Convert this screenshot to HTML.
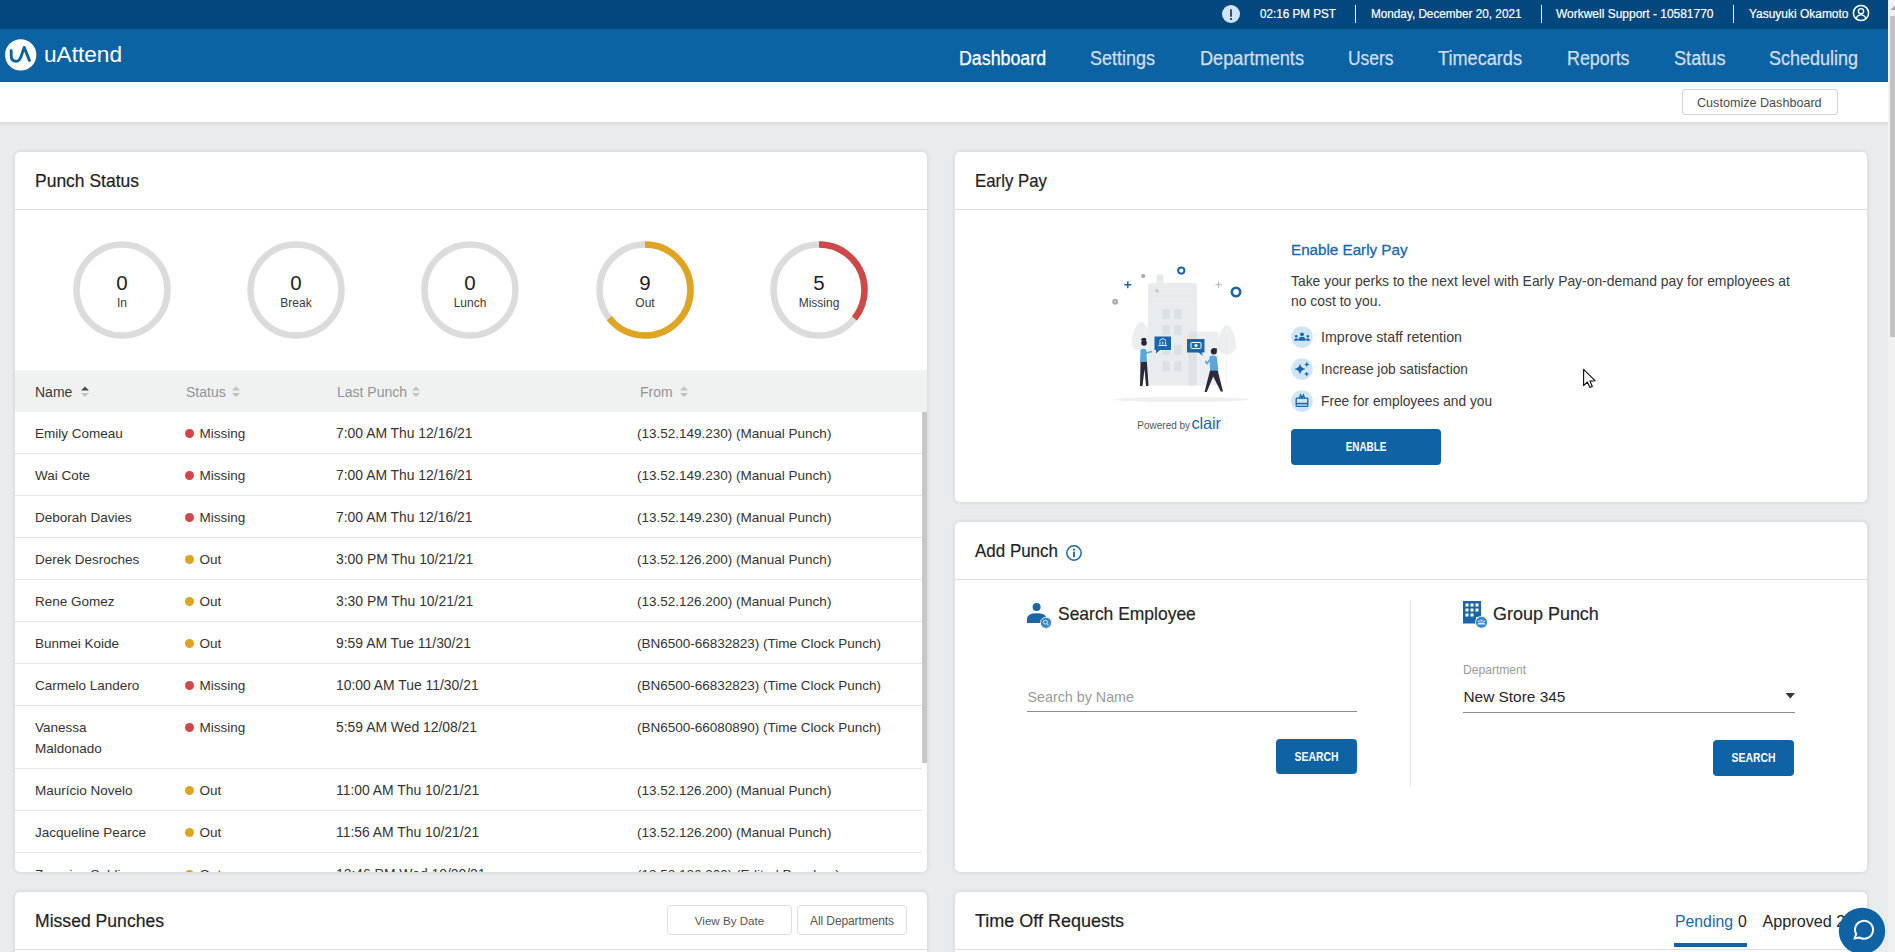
<!DOCTYPE html>
<html><head><meta charset="utf-8">
<style>
*{box-sizing:border-box;margin:0;padding:0}
html,body{width:1895px;height:952px;overflow:hidden}
body{position:relative;background:#e9ecef;font-family:"Liberation Sans",sans-serif;color:#333}
.a{position:absolute;white-space:nowrap;line-height:1}
.card{position:absolute;background:#fff;border-radius:5px;overflow:hidden;box-shadow:0 0 4px rgba(0,0,0,.13)}
</style></head><body>
<div style="position:absolute;left:0px;top:0px;width:1888px;height:29px;background:#02487f"></div>
<div style="position:absolute;left:1222px;top:5px;width:18px;height:18px;background:#cfe4f4;border-radius:50%"></div>
<div style="position:absolute;left:1230px;top:8.5px;width:2px;height:8px;background:#3b4a78;border-radius:1px"></div>
<div style="position:absolute;left:1230px;top:18px;width:2px;height:2px;background:#3b4a78"></div>
<div class="a" style="left:1260px;top:8px;font-size:12.5px;color:#fff;transform:scaleX(0.9347);transform-origin:0 0;-webkit-text-stroke:0.2px #fff">02:16 PM PST</div>
<div style="position:absolute;left:1355px;top:5px;width:1px;height:18px;background:#fff"></div>
<div class="a" style="left:1371px;top:8px;font-size:12.5px;color:#fff;transform:scaleX(0.9388);transform-origin:0 0;-webkit-text-stroke:0.2px #fff">Monday, December 20, 2021</div>
<div style="position:absolute;left:1541px;top:5px;width:1px;height:18px;background:#fff"></div>
<div class="a" style="left:1556px;top:8px;font-size:12.5px;color:#fff;transform:scaleX(0.9578);transform-origin:0 0;-webkit-text-stroke:0.2px #fff">Workwell Support - 10581770</div>
<div style="position:absolute;left:1733px;top:5px;width:1px;height:18px;background:#fff"></div>
<div class="a" style="left:1749px;top:8px;font-size:12.5px;color:#fff;transform:scaleX(0.9567);transform-origin:0 0;-webkit-text-stroke:0.2px #fff">Yasuyuki Okamoto</div>
<svg style="position:absolute;left:1852px;top:4px" width="18" height="18" viewBox="0 0 18 18"><circle cx="9" cy="9" r="7.6" fill="none" stroke="#fff" stroke-width="1.5"/><circle cx="9" cy="7.2" r="2.6" fill="none" stroke="#fff" stroke-width="1.4"/><path d="M4.2 14.6 C5.2 11.8 7 10.9 9 10.9 C11 10.9 12.8 11.8 13.8 14.6" fill="none" stroke="#fff" stroke-width="1.4"/></svg>
<div style="position:absolute;left:0px;top:29px;width:1888px;height:53px;background:#0c63a4"></div>
<svg style="position:absolute;left:0px;top:29px" width="40" height="53" viewBox="0 29 40 53"><circle cx="20.7" cy="54.9" r="15.6" fill="#fff"/><path d="M11.2 50.6 V55.6 C11.2 59.6 13.3 61.3 16 61.3 C18.7 61.3 20 59.6 21 56.6 L24.2 47.4 L29.4 60.4" fill="none" stroke="#0c63a4" stroke-width="2.9" stroke-linecap="round" stroke-linejoin="round"/></svg>
<div class="a" style="left:44px;top:44px;font-size:22.6px;color:#fff;transform:scaleX(1.0018);transform-origin:0 0;">uAttend</div>
<div class="a" style="left:959px;top:49px;font-size:19.5px;color:#fff;transform:scaleX(0.9124);transform-origin:0 0;-webkit-text-stroke:0.25px #fff">Dashboard</div>
<div class="a" style="left:1090px;top:49px;font-size:19.5px;color:#d3deea;transform:scaleX(0.9221);transform-origin:0 0;-webkit-text-stroke:0.25px #d3deea">Settings</div>
<div class="a" style="left:1200px;top:49px;font-size:19.5px;color:#d3deea;transform:scaleX(0.9316);transform-origin:0 0;-webkit-text-stroke:0.25px #d3deea">Departments</div>
<div class="a" style="left:1348px;top:49px;font-size:19.5px;color:#d3deea;transform:scaleX(0.8940);transform-origin:0 0;-webkit-text-stroke:0.25px #d3deea">Users</div>
<div class="a" style="left:1438px;top:49px;font-size:19.5px;color:#d3deea;transform:scaleX(0.9304);transform-origin:0 0;-webkit-text-stroke:0.25px #d3deea">Timecards</div>
<div class="a" style="left:1567px;top:49px;font-size:19.5px;color:#d3deea;transform:scaleX(0.9158);transform-origin:0 0;-webkit-text-stroke:0.25px #d3deea">Reports</div>
<div class="a" style="left:1674px;top:49px;font-size:19.5px;color:#d3deea;transform:scaleX(0.9316);transform-origin:0 0;-webkit-text-stroke:0.25px #d3deea">Status</div>
<div class="a" style="left:1769px;top:49px;font-size:19.5px;color:#d3deea;transform:scaleX(0.9220);transform-origin:0 0;-webkit-text-stroke:0.25px #d3deea">Scheduling</div>
<div style="position:absolute;left:0px;top:82px;width:1888px;height:40px;background:#fff;box-shadow:0 1px 4px rgba(0,0,0,.12)"></div>
<div style="position:absolute;left:1682px;top:89px;width:156px;height:26px;border:1px solid #d4d4d4;border-radius:3px;background:#fff"></div>
<div class="a" style="left:1697px;top:97px;font-size:12.6px;color:#4a4a4a;">Customize Dashboard</div>
<div style="position:absolute;left:1888px;top:0px;width:7px;height:952px;background:#f1f1f1"></div>
<div style="position:absolute;left:1890px;top:16px;width:5px;height:321px;background:#c2c1c2"></div>
<svg style="position:absolute;left:1890px;top:5px" width="5" height="6" viewBox="0 0 5 6"><path d="M0.5 5 L4.5 1 L5 1 L5 5 Z" fill="#a3a3a3"/></svg>
<div class="card" style="left:15px;top:152px;width:912px;height:720px">
<div class="a" style="left:20px;top:21px;font-size:17.5px;color:#1f1f1f;transform:scaleX(0.9988);transform-origin:0 0;-webkit-text-stroke:0.2px #222">Punch Status</div>
<div style="position:absolute;left:0px;top:57px;width:912px;height:1px;background:#dedede"></div>
<svg style="position:absolute;left:57px;top:88px" width="100" height="100" viewBox="0 0 100 100"><circle cx="50" cy="50" r="45.5" fill="none" stroke="#dcdcdc" stroke-width="6.5"/></svg>
<div class="a" style="left:57px;top:121px;font-size:20.5px;color:#1f1f1f;width:100px;text-align:center;">0</div>
<div class="a" style="left:57px;top:145px;font-size:12px;color:#3a3a3a;width:100px;text-align:center;">In</div>
<svg style="position:absolute;left:231px;top:88px" width="100" height="100" viewBox="0 0 100 100"><circle cx="50" cy="50" r="45.5" fill="none" stroke="#dcdcdc" stroke-width="6.5"/></svg>
<div class="a" style="left:231px;top:121px;font-size:20.5px;color:#1f1f1f;width:100px;text-align:center;">0</div>
<div class="a" style="left:231px;top:145px;font-size:12px;color:#3a3a3a;width:100px;text-align:center;">Break</div>
<svg style="position:absolute;left:405px;top:88px" width="100" height="100" viewBox="0 0 100 100"><circle cx="50" cy="50" r="45.5" fill="none" stroke="#dcdcdc" stroke-width="6.5"/></svg>
<div class="a" style="left:405px;top:121px;font-size:20.5px;color:#1f1f1f;width:100px;text-align:center;">0</div>
<div class="a" style="left:405px;top:145px;font-size:12px;color:#3a3a3a;width:100px;text-align:center;">Lunch</div>
<svg style="position:absolute;left:580px;top:88px" width="100" height="100" viewBox="0 0 100 100"><circle cx="50" cy="50" r="45.5" fill="none" stroke="#dcdcdc" stroke-width="6.5"/><circle cx="50" cy="50" r="45.5" fill="none" stroke="#e0a423" stroke-width="6.5" stroke-dasharray="183.78 285.88" transform="rotate(-90 50 50)"/></svg>
<div class="a" style="left:580px;top:121px;font-size:20.5px;color:#1f1f1f;width:100px;text-align:center;">9</div>
<div class="a" style="left:580px;top:145px;font-size:12px;color:#3a3a3a;width:100px;text-align:center;">Out</div>
<svg style="position:absolute;left:754px;top:88px" width="100" height="100" viewBox="0 0 100 100"><circle cx="50" cy="50" r="45.5" fill="none" stroke="#dcdcdc" stroke-width="6.5"/><circle cx="50" cy="50" r="45.5" fill="none" stroke="#d0474a" stroke-width="6.5" stroke-dasharray="102.10 285.88" transform="rotate(-90 50 50)"/></svg>
<div class="a" style="left:754px;top:121px;font-size:20.5px;color:#1f1f1f;width:100px;text-align:center;">5</div>
<div class="a" style="left:754px;top:145px;font-size:12px;color:#3a3a3a;width:100px;text-align:center;">Missing</div>
<div style="position:absolute;left:0px;top:218px;width:912px;height:42px;background:#f0f2f2"></div>
<div class="a" style="left:20px;top:233px;font-size:14px;color:#3a3a3a;">Name</div>
<div class="a" style="left:171px;top:233px;font-size:14px;color:#8d959b;">Status</div>
<div class="a" style="left:322px;top:233px;font-size:14px;color:#8d959b;">Last Punch</div>
<div class="a" style="left:625px;top:233px;font-size:14px;color:#8d959b;">From</div>
<svg style="position:absolute;left:65px;top:233px" width="10" height="14" viewBox="0 0 10 14"><path d="M1 5.5 L5 1.5 L9 5.5 Z" fill="#4a4a4a"/><path d="M1 8 L5 12 L9 8 Z" fill="#bfc3c6"/></svg>
<svg style="position:absolute;left:216px;top:233px" width="10" height="14" viewBox="0 0 10 14"><path d="M1 5.5 L5 1.5 L9 5.5 Z" fill="#bfc3c6"/><path d="M1 8 L5 12 L9 8 Z" fill="#bfc3c6"/></svg>
<svg style="position:absolute;left:396px;top:233px" width="10" height="14" viewBox="0 0 10 14"><path d="M1 5.5 L5 1.5 L9 5.5 Z" fill="#bfc3c6"/><path d="M1 8 L5 12 L9 8 Z" fill="#bfc3c6"/></svg>
<svg style="position:absolute;left:664px;top:233px" width="10" height="14" viewBox="0 0 10 14"><path d="M1 5.5 L5 1.5 L9 5.5 Z" fill="#bfc3c6"/><path d="M1 8 L5 12 L9 8 Z" fill="#bfc3c6"/></svg>
<div class="a" style="left:20px;top:275px;font-size:13.5px;color:#333;">Emily Comeau</div>
<div style="position:absolute;left:170px;top:276.5px;width:9px;height:9px;background:#d0474a;border-radius:50%"></div>
<div class="a" style="left:184.5px;top:275px;font-size:13.5px;color:#333;">Missing</div>
<div class="a" style="left:321px;top:275px;font-size:13.9px;color:#333;">7:00 AM Thu 12/16/21</div>
<div class="a" style="left:622px;top:275px;font-size:13.5px;color:#333;">(13.52.149.230) (Manual Punch)</div>
<div style="position:absolute;left:0px;top:301px;width:907px;height:1px;background:#e6e6e6"></div>
<div class="a" style="left:20px;top:317px;font-size:13.5px;color:#333;">Wai Cote</div>
<div style="position:absolute;left:170px;top:318.5px;width:9px;height:9px;background:#d0474a;border-radius:50%"></div>
<div class="a" style="left:184.5px;top:317px;font-size:13.5px;color:#333;">Missing</div>
<div class="a" style="left:321px;top:317px;font-size:13.9px;color:#333;">7:00 AM Thu 12/16/21</div>
<div class="a" style="left:622px;top:317px;font-size:13.5px;color:#333;">(13.52.149.230) (Manual Punch)</div>
<div style="position:absolute;left:0px;top:343px;width:907px;height:1px;background:#e6e6e6"></div>
<div class="a" style="left:20px;top:359px;font-size:13.5px;color:#333;">Deborah Davies</div>
<div style="position:absolute;left:170px;top:360.5px;width:9px;height:9px;background:#d0474a;border-radius:50%"></div>
<div class="a" style="left:184.5px;top:359px;font-size:13.5px;color:#333;">Missing</div>
<div class="a" style="left:321px;top:359px;font-size:13.9px;color:#333;">7:00 AM Thu 12/16/21</div>
<div class="a" style="left:622px;top:359px;font-size:13.5px;color:#333;">(13.52.149.230) (Manual Punch)</div>
<div style="position:absolute;left:0px;top:385px;width:907px;height:1px;background:#e6e6e6"></div>
<div class="a" style="left:20px;top:401px;font-size:13.5px;color:#333;">Derek Desroches</div>
<div style="position:absolute;left:170px;top:402.5px;width:9px;height:9px;background:#e0a423;border-radius:50%"></div>
<div class="a" style="left:184.5px;top:401px;font-size:13.5px;color:#333;">Out</div>
<div class="a" style="left:321px;top:401px;font-size:13.9px;color:#333;">3:00 PM Thu 10/21/21</div>
<div class="a" style="left:622px;top:401px;font-size:13.5px;color:#333;">(13.52.126.200) (Manual Punch)</div>
<div style="position:absolute;left:0px;top:427px;width:907px;height:1px;background:#e6e6e6"></div>
<div class="a" style="left:20px;top:443px;font-size:13.5px;color:#333;">Rene Gomez</div>
<div style="position:absolute;left:170px;top:444.5px;width:9px;height:9px;background:#e0a423;border-radius:50%"></div>
<div class="a" style="left:184.5px;top:443px;font-size:13.5px;color:#333;">Out</div>
<div class="a" style="left:321px;top:443px;font-size:13.9px;color:#333;">3:30 PM Thu 10/21/21</div>
<div class="a" style="left:622px;top:443px;font-size:13.5px;color:#333;">(13.52.126.200) (Manual Punch)</div>
<div style="position:absolute;left:0px;top:469px;width:907px;height:1px;background:#e6e6e6"></div>
<div class="a" style="left:20px;top:485px;font-size:13.5px;color:#333;">Bunmei Koide</div>
<div style="position:absolute;left:170px;top:486.5px;width:9px;height:9px;background:#e0a423;border-radius:50%"></div>
<div class="a" style="left:184.5px;top:485px;font-size:13.5px;color:#333;">Out</div>
<div class="a" style="left:321px;top:485px;font-size:13.9px;color:#333;">9:59 AM Tue 11/30/21</div>
<div class="a" style="left:622px;top:485px;font-size:13.5px;color:#333;">(BN6500-66832823) (Time Clock Punch)</div>
<div style="position:absolute;left:0px;top:511px;width:907px;height:1px;background:#e6e6e6"></div>
<div class="a" style="left:20px;top:527px;font-size:13.5px;color:#333;">Carmelo Landero</div>
<div style="position:absolute;left:170px;top:528.5px;width:9px;height:9px;background:#d0474a;border-radius:50%"></div>
<div class="a" style="left:184.5px;top:527px;font-size:13.5px;color:#333;">Missing</div>
<div class="a" style="left:321px;top:527px;font-size:13.9px;color:#333;">10:00 AM Tue 11/30/21</div>
<div class="a" style="left:622px;top:527px;font-size:13.5px;color:#333;">(BN6500-66832823) (Time Clock Punch)</div>
<div style="position:absolute;left:0px;top:553px;width:907px;height:1px;background:#e6e6e6"></div>
<div class="a" style="left:20px;top:569px;font-size:13.5px;color:#333;">Vanessa</div>
<div class="a" style="left:20px;top:590px;font-size:13.5px;color:#333;">Maldonado</div>
<div style="position:absolute;left:170px;top:570.5px;width:9px;height:9px;background:#d0474a;border-radius:50%"></div>
<div class="a" style="left:184.5px;top:569px;font-size:13.5px;color:#333;">Missing</div>
<div class="a" style="left:321px;top:569px;font-size:13.9px;color:#333;">5:59 AM Wed 12/08/21</div>
<div class="a" style="left:622px;top:569px;font-size:13.5px;color:#333;">(BN6500-66080890) (Time Clock Punch)</div>
<div style="position:absolute;left:0px;top:616px;width:907px;height:1px;background:#e6e6e6"></div>
<div class="a" style="left:20px;top:632px;font-size:13.5px;color:#333;">Maurício Novelo</div>
<div style="position:absolute;left:170px;top:633.5px;width:9px;height:9px;background:#e0a423;border-radius:50%"></div>
<div class="a" style="left:184.5px;top:632px;font-size:13.5px;color:#333;">Out</div>
<div class="a" style="left:321px;top:632px;font-size:13.9px;color:#333;">11:00 AM Thu 10/21/21</div>
<div class="a" style="left:622px;top:632px;font-size:13.5px;color:#333;">(13.52.126.200) (Manual Punch)</div>
<div style="position:absolute;left:0px;top:658px;width:907px;height:1px;background:#e6e6e6"></div>
<div class="a" style="left:20px;top:674px;font-size:13.5px;color:#333;">Jacqueline Pearce</div>
<div style="position:absolute;left:170px;top:675.5px;width:9px;height:9px;background:#e0a423;border-radius:50%"></div>
<div class="a" style="left:184.5px;top:674px;font-size:13.5px;color:#333;">Out</div>
<div class="a" style="left:321px;top:674px;font-size:13.9px;color:#333;">11:56 AM Thu 10/21/21</div>
<div class="a" style="left:622px;top:674px;font-size:13.5px;color:#333;">(13.52.126.200) (Manual Punch)</div>
<div style="position:absolute;left:0px;top:700px;width:907px;height:1px;background:#e6e6e6"></div>
<div class="a" style="left:20px;top:716px;font-size:13.5px;color:#333;">Zacarias Saldivar</div>
<div style="position:absolute;left:170px;top:717.5px;width:9px;height:9px;background:#e0a423;border-radius:50%"></div>
<div class="a" style="left:184.5px;top:716px;font-size:13.5px;color:#333;">Out</div>
<div class="a" style="left:321px;top:716px;font-size:13.9px;color:#333;">12:46 PM Wed 10/20/21</div>
<div class="a" style="left:622px;top:716px;font-size:13.5px;color:#333;">(13.52.126.200) (Edited Punches)</div>
<div style="position:absolute;left:0px;top:742px;width:907px;height:1px;background:#e6e6e6"></div>
<div style="position:absolute;left:907px;top:260px;width:5px;height:351px;background:#c8c8c8"></div>
</div>
<div class="card" style="left:955px;top:152px;width:912px;height:350px">
<div class="a" style="left:20px;top:21px;font-size:17.5px;color:#1f1f1f;transform:scaleX(0.9613);transform-origin:0 0;-webkit-text-stroke:0.2px #222">Early Pay</div>
<div style="position:absolute;left:0px;top:57px;width:912px;height:1px;background:#dedede"></div>
<svg style="position:absolute;left:145px;top:103px" width="160" height="185" viewBox="0 0 160 185"><ellipse cx="81" cy="144.5" rx="68" ry="2.6" fill="#eef0f2"/>
<path d="M41.3 66.7 C46 67 51 80 51 86.5 C51 92.5 46.5 95.7 41.3 95.7 C36 95.7 31.7 92.5 31.7 86.5 C31.7 80 36.5 67 41.3 66.7 Z" fill="#eceef0"/>
<path d="M126.8 70.3 C131.5 70.6 136.2 83.5 136.2 90 C136.2 96 131.8 99.3 126.8 99.3 C121.8 99.3 117.4 96 117.4 90 C117.4 83.5 122 70.6 126.8 70.3 Z" fill="#eceef0"/><path d="M126.4 81 V130.5" stroke="#e6e8ea" stroke-width="0.5"/>
<rect x="56.5" y="19.5" width="7" height="9" rx="1" fill="#e6e9ec"/>
<rect x="48" y="28" width="49" height="102.5" rx="3" fill="#e9ecef"/>
<line x1="49" y1="41" x2="95" y2="41" stroke="#dde1e5" stroke-width="0.6"/>
<rect x="88.4" y="76.5" width="30" height="54" rx="2" fill="#eceff1"/><rect x="88.4" y="76.5" width="8.5" height="54" rx="2" fill="#dee2e7"/>
<g fill="#dbe0e4">
<rect x="62.5" y="54" width="7.5" height="10" rx="1"/><rect x="74" y="54" width="7.5" height="10" rx="1"/>
<rect x="62.5" y="70" width="7.5" height="10" rx="1"/><rect x="74" y="70" width="7.5" height="10" rx="1"/>
<rect x="62.5" y="90" width="7.5" height="10" rx="1"/><rect x="74" y="90" width="7.5" height="10" rx="1"/>
<rect x="62.5" y="106.5" width="7.5" height="10" rx="1"/><rect x="74" y="106.5" width="7.5" height="10" rx="1"/>
</g>
<path d="M54.5 81.5 h16.5 v13.5 h-11 l-4 3.5 v-3.5 h-1.5 z" fill="#1b66a8"/>
<path d="M58.5 90.5 h8.5 M59.5 85.5 l3.3 -2 l3.3 2 M60 86.5 v3.2 M62.8 86.5 v3.2 M65.6 86.5 v3.2" stroke="#fff" stroke-width="0.9" fill="none"/>
<path d="M87 84 h17.5 v13.5 h-3 l1.5 3.5 l-4.5 -3.5 h-11.5 z" fill="#1b66a8"/>
<rect x="91" y="87.5" width="10" height="6" rx="0.8" fill="none" stroke="#fff" stroke-width="1"/>
<circle cx="96" cy="90.5" r="1.6" fill="#fff"/>
<path d="M40 132 q4 -3 7 0 z" fill="#e6e9ec"/>
<circle cx="44" cy="88" r="2.8" fill="#26263a"/>
<path d="M40.5 85 q3 -4 6 -1 l-1 3 z" fill="#26263a"/>
<path d="M40.5 95 q3 -2.5 6 0 l0.5 12 h-7 z" fill="#5aa6dd"/>
<path d="M46 98 l6 -1.5" stroke="#5aa6dd" stroke-width="1.6"/>
<path d="M40.5 107 l-0.5 24 h2.5 l2 -17 l1.5 17 h2.5 l-1.5 -24 z" fill="#2a2a3c"/>
<circle cx="113.8" cy="96.6" r="3" fill="#26263a"/>
<path d="M110.6 96 q1.5 -4.2 6.2 -2.4 q0.6 1.6 -0.8 2.8 z" fill="#26263a"/>
<path d="M109.5 101.5 q4 -2.2 7.2 0.5 l1.6 13.8 h-8.2 z" fill="#5aa6dd"/>
<path d="M110.5 104 l-3.5 4.6 l-1.6 -2.8" stroke="#5aa6dd" stroke-width="1.6" fill="none"/>
<path d="M110 115.5 l-5.5 21.5 h2.3 l6.4 -15.5 l7.6 15 h2.2 l-5.3 -21 z" fill="#2a2a3c"/>
<circle cx="81.3" cy="15.6" r="3.1" fill="none" stroke="#1b66a8" stroke-width="2"/>
<circle cx="136" cy="37" r="4.2" fill="none" stroke="#1b66a8" stroke-width="2.6"/>
<circle cx="43.2" cy="21" r="2.1" fill="#a9a9a9"/>
<circle cx="15.2" cy="46.7" r="2.9" fill="#a9a9a9"/>
<circle cx="15.2" cy="46.7" r="1.1" fill="#d0d0d0"/>
<path d="M27.8 26.2 v7 M24.3 29.7 h7" stroke="#1b66a8" stroke-width="1.5"/>
<path d="M118.6 26.4 v6.6 M115.3 29.7 h6.6" stroke="#b4b4b4" stroke-width="1.1"/>
<path d="M56.8 33.8 v4.4 M54.6 36 h4.4" stroke="#b8b8b8" stroke-width="0.9"/>
<text x="37.3" y="173.5" font-family="Liberation Sans" font-size="10" fill="#555">Powered by</text>
<text x="91.5" y="173.5" font-family="Liberation Sans" font-size="16.5" fill="#1b66a8" letter-spacing="-0.2">clair</text></svg>
<div class="a" style="left:336px;top:90px;font-size:15.2px;color:#1a67a9;-webkit-text-stroke:0.3px #1a67a9">Enable Early Pay</div>
<div class="a" style="left:336px;top:123px;font-size:13.9px;color:#3a3a3a;">Take your perks to the next level with Early Pay-on-demand pay for employees at</div>
<div class="a" style="left:336px;top:143px;font-size:13.9px;color:#3a3a3a;">no cost to you.</div>
<svg style="position:absolute;left:336px;top:174px" width="22" height="22" viewBox="0 0 22 22"><circle cx="11" cy="11" r="10.8" fill="#cfe6f6"/><g fill="#1b66a8"><circle cx="11" cy="8.3" r="1.9"/><path d="M7.2 14.8 Q7.4 10.8 11 10.8 Q14.6 10.8 14.8 14.8 Z"/><circle cx="5.2" cy="10.2" r="1.3"/><path d="M3 14.8 Q3.1 12.3 5.2 12.3 Q6.6 12.3 7 13.2 L6.6 14.8 Z"/><circle cx="16.8" cy="10.2" r="1.3"/><path d="M19 14.8 Q18.9 12.3 16.8 12.3 Q15.4 12.3 15 13.2 L15.4 14.8 Z"/></g></svg>
<div class="a" style="left:366px;top:178px;font-size:14.2px;color:#3a3a3a;transform:scaleX(1.0007);transform-origin:0 0;">Improve staff retention</div>
<svg style="position:absolute;left:336px;top:206px" width="22" height="22" viewBox="0 0 22 22"><circle cx="11" cy="11" r="10.8" fill="#cfe6f6"/><g fill="#1b66a8"><path d="M9 5.5 Q9.8 10.2 14.6 11 Q9.8 11.8 9 16.5 Q8.2 11.8 3.4 11 Q8.2 10.2 9 5.5 Z"/><path d="M15.8 3.8 Q16.1 6.2 18.5 6.5 Q16.1 6.8 15.8 9.2 Q15.5 6.8 13.1 6.5 Q15.5 6.2 15.8 3.8 Z"/><path d="M15.6 13.4 Q15.9 15.7 18.2 16 Q15.9 16.3 15.6 18.6 Q15.3 16.3 13 16 Q15.3 15.7 15.6 13.4 Z"/></g></svg>
<div class="a" style="left:366px;top:210px;font-size:14.2px;color:#3a3a3a;transform:scaleX(0.9654);transform-origin:0 0;">Increase job satisfaction</div>
<svg style="position:absolute;left:336px;top:238px" width="22" height="22" viewBox="0 0 22 22"><circle cx="11" cy="11" r="10.8" fill="#cfe6f6"/><g fill="none" stroke="#1b66a8" stroke-width="1.3"><rect x="5.2" y="8.2" width="11.6" height="8.2" rx="0.8"/><path d="M5.2 13.6 h11.6" stroke-width="1.6"/><path d="M8.3 8.2 L9.6 5 L11 8.2 L12.4 5 L13.7 8.2"/></g></svg>
<div class="a" style="left:366px;top:242px;font-size:14.2px;color:#3a3a3a;transform:scaleX(0.9684);transform-origin:0 0;">Free for employees and you</div>
<div style="position:absolute;left:336px;top:277px;width:150px;height:36px;background:#0f62a3;border-radius:4px"></div>
<div class="a" style="left:336px;top:288px;font-size:13px;color:#fff;font-weight:700;width:150px;text-align:center;transform:scaleX(0.76);transform-origin:75px 0">ENABLE</div>
</div>
<svg style="position:absolute;left:1580px;top:366px" width="18" height="24" viewBox="0 0 18 24"><path d="M3.6 3.3 L3.6 19.6 L7.4 16 L9.9 21.5 L12.3 20.5 L9.9 15.1 L15 14.7 Z" fill="#fff" stroke="#111" stroke-width="1.15" stroke-linejoin="round"/></svg>
<div class="card" style="left:955px;top:522px;width:912px;height:350px">
<div class="a" style="left:20px;top:21px;font-size:17.5px;color:#1f1f1f;transform:scaleX(0.9689);transform-origin:0 0;-webkit-text-stroke:0.2px #222">Add Punch</div>
<svg style="position:absolute;left:110px;top:22px" width="18" height="18" viewBox="0 0 18 18"><circle cx="9" cy="9" r="7.2" fill="none" stroke="#1b66a8" stroke-width="1.5"/><circle cx="9" cy="5.6" r="1.1" fill="#1b66a8"/><rect x="8.1" y="7.6" width="1.8" height="5.6" fill="#1b66a8"/></svg>
<div style="position:absolute;left:0px;top:57px;width:912px;height:1px;background:#dedede"></div>
<svg style="position:absolute;left:71px;top:79px" width="28" height="28" viewBox="0 0 28 28"><circle cx="10.6" cy="6" r="4" fill="#1b66a8"/><path d="M1 22 V18 Q1 12.2 10.6 12.2 Q20 12.2 20.5 17 L20.5 22 Z" fill="#1b66a8"/><circle cx="20" cy="21.8" r="5.6" fill="#3e87c6" stroke="#fff" stroke-width="0.8"/><circle cx="19.3" cy="21.1" r="2" fill="none" stroke="#cfe4f6" stroke-width="1"/><path d="M20.8 22.6 L22.6 24.4" stroke="#cfe4f6" stroke-width="1.1"/></svg>
<div class="a" style="left:103px;top:84px;font-size:17.8px;color:#262626;transform:scaleX(0.9820);transform-origin:0 0;-webkit-text-stroke:0.2px #262626">Search Employee</div>
<div class="a" style="left:72.5px;top:168px;font-size:14.3px;color:#9a9a9a;">Search by Name</div>
<div style="position:absolute;left:72px;top:189px;width:330px;height:1px;background:#8a8a8a"></div>
<div style="position:absolute;left:321px;top:217px;width:81px;height:35px;background:#0f62a3;border-radius:4px"></div>
<div class="a" style="left:321px;top:228px;font-size:13px;color:#fff;font-weight:700;width:81px;text-align:center;transform:scaleX(0.8);transform-origin:40.5px 0">SEARCH</div>
<div style="position:absolute;left:455px;top:78px;width:1px;height:186px;background:#e6e6e6"></div>
<svg style="position:absolute;left:507px;top:78px" width="28" height="30" viewBox="0 0 28 30"><path d="M1 1 H19 V17 H14 V23.5 H1 Z" fill="#1b66a8"/><g fill="#fff"><rect x="3.5" y="3.5" width="3" height="3"/><rect x="8.5" y="3.5" width="3" height="3"/><rect x="13.5" y="3.5" width="3" height="3"/><rect x="3.5" y="8.5" width="3" height="3"/><rect x="8.5" y="8.5" width="3" height="3"/><rect x="13.5" y="8.5" width="3" height="3"/><rect x="3.5" y="13.5" width="3" height="3"/><rect x="8.5" y="13.5" width="3" height="3"/></g><circle cx="19.5" cy="22.2" r="6" fill="#3e87c6" stroke="#fff" stroke-width="0.8"/><g fill="#dcebf8"><circle cx="19.5" cy="20.5" r="1.1"/><circle cx="16.8" cy="21.3" r="0.9"/><circle cx="22.2" cy="21.3" r="0.9"/><path d="M15.5 24.5 h8 q-0.5 -2 -4 -2 q-3.5 0 -4 2z"/></g></svg>
<div class="a" style="left:538px;top:84px;font-size:17.8px;color:#262626;transform:scaleX(1.0102);transform-origin:0 0;-webkit-text-stroke:0.2px #262626">Group Punch</div>
<div class="a" style="left:508px;top:142px;font-size:12.1px;color:#9a9a9a;">Department</div>
<div class="a" style="left:508.5px;top:167px;font-size:15.4px;color:#262626;">New Store 345</div>
<svg style="position:absolute;left:830px;top:170px" width="11" height="8" viewBox="0 0 11 8"><path d="M0.5 1 H10 L5.25 6.5 Z" fill="#333"/></svg>
<div style="position:absolute;left:508px;top:190px;width:332px;height:1px;background:#8a8a8a"></div>
<div style="position:absolute;left:758px;top:218px;width:81px;height:36px;background:#0f62a3;border-radius:4px"></div>
<div class="a" style="left:758px;top:229px;font-size:13px;color:#fff;font-weight:700;width:81px;text-align:center;transform:scaleX(0.8);transform-origin:40.5px 0">SEARCH</div>
</div>
<div class="card" style="left:15px;top:892px;width:912px;height:120px">
<div class="a" style="left:20px;top:21px;font-size:17.5px;color:#1f1f1f;transform:scaleX(1.0050);transform-origin:0 0;-webkit-text-stroke:0.2px #222">Missed Punches</div>
<div style="position:absolute;left:652px;top:13px;width:125px;height:30px;border:1px solid #dcdcdc;border-radius:4px"></div>
<div class="a" style="left:652px;top:23px;font-size:11.6px;color:#555;width:125px;text-align:center;">View By Date</div>
<div style="position:absolute;left:782px;top:13px;width:110px;height:30px;border:1px solid #dcdcdc;border-radius:4px"></div>
<div class="a" style="left:782px;top:23px;font-size:12px;color:#555;width:110px;text-align:center;letter-spacing:-0.1px">All Departments</div>
<div style="position:absolute;left:0px;top:57px;width:912px;height:1px;background:#dedede"></div>
</div>
<div class="card" style="left:955px;top:892px;width:912px;height:120px">
<div class="a" style="left:20px;top:21px;font-size:17.5px;color:#1f1f1f;transform:scaleX(1.0283);transform-origin:0 0;-webkit-text-stroke:0.2px #222">Time Off Requests</div>
<div class="a" style="left:720px;top:22px;font-size:15.8px;color:#1a67a9;">Pending</div>
<div class="a" style="left:783px;top:22px;font-size:15.8px;color:#1f1f1f;">0</div>
<div class="a" style="left:807.5px;top:21px;font-size:16.2px;color:#1f1f1f;">Approved 2</div>
<div style="position:absolute;left:719px;top:51px;width:73px;height:4px;background:#0f62a3"></div>
<div style="position:absolute;left:0px;top:57px;width:912px;height:1px;background:#dedede"></div>
</div>
<svg style="position:absolute;left:1838px;top:907px" width="48" height="48" viewBox="0 0 48 48"><circle cx="24" cy="24" r="23.2" fill="#0f62a3"/><path d="M16.5 31.5 L18.2 27.2 A9 9 0 1 1 21.6 30.6 Z" fill="none" stroke="#fff" stroke-width="2" stroke-linejoin="round"/></svg>
</body></html>
